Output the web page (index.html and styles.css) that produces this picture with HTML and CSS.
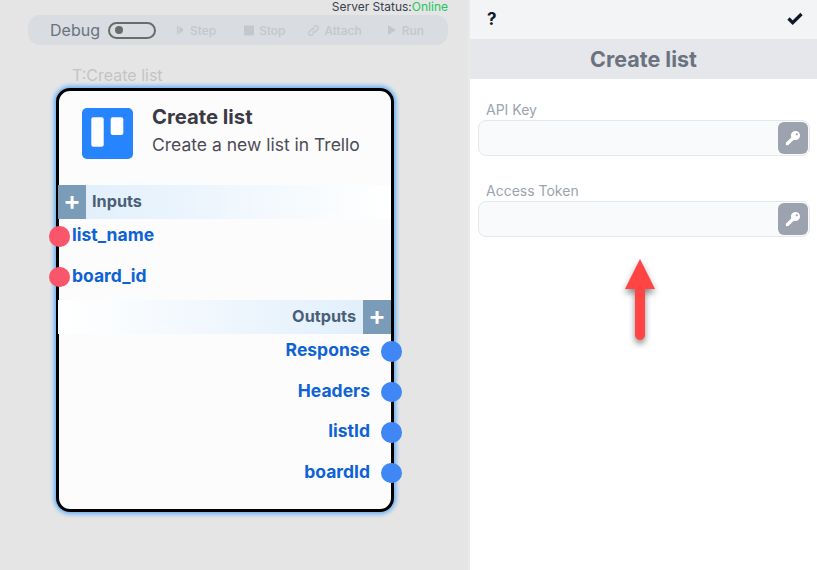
FILE: index.html
```html
<!DOCTYPE html>
<html lang="en">

<head>
    <meta charset="UTF-8">
    <title>Create list</title>
    <link rel="stylesheet" href="styles.css">
</head>

<body>
    <!-- Flow canvas -->
    <section class="canvas">
        <div class="serverStatus">Server Status:<span class="online">Online</span></div>
        <div class="toolbar">
            <span class="debugLabel">Debug</span>
            <span class="toggle"><span class="toggleKnob"></span></span>
            <span class="tool toolStep">
                <svg width="8" height="10" viewBox="0 0 8 10"><path d="M0 1h1.500v8H0zM2.500 1 6.500 5 2.500 9z" fill="#c4c7cb"/></svg>
                Step
            </span>
            <span class="tool toolStop">
                <svg width="10" height="11" viewBox="0 0 10 11"><rect width="10" height="10" y="0.500" fill="#c4c7cb"/></svg>
                Stop
            </span>
            <span class="tool toolAttach">
                <svg width="13" height="13" viewBox="0 0 13 13" fill="none" stroke="#c4c7cb" stroke-width="1.300"><path d="M5.500 7.500a2.200 2.200 0 0 0 3.100 0l2.200-2.200a2.200 2.200 0 0 0-3.100-3.100L6.600 3.300"/><path d="M7.500 5.500a2.200 2.200 0 0 0-3.100 0L2.200 7.700a2.200 2.200 0 0 0 3.100 3.100l1.100-1.100"/></svg>
                Attach
            </span>
            <span class="tool toolRun">
                <svg width="9" height="10" viewBox="0 0 9 10"><path d="M0 0 8 5 0 10z" fill="#c4c7cb"/></svg>
                Run
            </span>
        </div>

        <div class="nodeTitle">T:Create list</div>
        <div class="node">
            <div class="nodeHead">
                <svg class="trello" width="51" height="51" viewBox="0 0 51 51">
                    <rect width="51" height="51" rx="5" fill="#2684ff"/>
                    <rect x="9.300" y="9.300" width="12.400" height="29.400" rx="2" fill="#fff"/>
                    <rect x="28.700" y="9.300" width="12.600" height="17.700" rx="2" fill="#fff"/>
                </svg>
                <div class="nodeText">
                    <div class="nodeName">Create list</div>
                    <div class="nodeDesc">Create a new list in Trello</div>
                </div>
            </div>

            <div class="portHead inputsHead">
                <span class="plus">+</span>
                <span class="portHeadText">Inputs</span>
            </div>
            <div class="port inPort"><span class="dot red"></span>list_name</div>
            <div class="port inPort"><span class="dot red"></span>board_id</div>

            <div class="portHead outputsHead">
                <span class="portHeadText">Outputs</span>
                <span class="plus">+</span>
            </div>
            <div class="port outPort">Response<span class="dot blue"></span></div>
            <div class="port outPort">Headers<span class="dot blue"></span></div>
            <div class="port outPort">listId<span class="dot blue"></span></div>
            <div class="port outPort">boardId<span class="dot blue"></span></div>
        </div>
    </section>

    <!-- Settings panel -->
    <section class="panel">
        <div class="panelTop">
            <span class="help">?</span>
            <svg width="16" height="13" viewBox="0 0 16 13"><path d="M1.500 6.500 5.700 10.700 14.500 2" fill="none" stroke="#111827" stroke-width="3.200"/></svg>
        </div>
        <h2>Create list</h2>
        <div class="fields">
            <div class="field">
                <label>API Key</label>
                <div class="inputWrap">
                    <input type="text">
                    <button class="keyBtn">
                        <svg width="18" height="18" viewBox="0 0 18 18"><path d="M11.500 2a4.500 4.500 0 0 1 0 9c-.6 0-1.200-.1-1.700-.3L4.300 16 2 16.200l-.2-2.400 5.500-5.400a4.500 4.500 0 0 1 4.200-6.400zm1.300 2.200a1.100 1.100 0 1 0 0 2.200 1.100 1.100 0 0 0 0-2.200z" fill="#fff"/></svg>
                    </button>
                </div>
            </div>
            <div class="field">
                <label>Access Token</label>
                <div class="inputWrap">
                    <input type="text">
                    <button class="keyBtn">
                        <svg width="18" height="18" viewBox="0 0 18 18"><path d="M11.500 2a4.500 4.500 0 0 1 0 9c-.6 0-1.200-.1-1.700-.3L4.300 16 2 16.200l-.2-2.400 5.500-5.400a4.500 4.500 0 0 1 4.200-6.400zm1.300 2.200a1.100 1.100 0 1 0 0 2.200 1.100 1.100 0 0 0 0-2.200z" fill="#fff"/></svg>
                    </button>
                </div>
            </div>
        </div>
        <svg class="arrow" width="50" height="100" viewBox="0 0 50 100">
            <path d="M25 4 40 34H30V80a5 5 0 0 1-10 0V34H10z" fill="#ff4444"/>
        </svg>
    </section>
</body>

</html>
```

FILE: styles.css
```css
* {
    box-sizing: border-box;
}

body {
    margin: 0;
    width: 817px;
    height: 570px;
    display: flex;
    overflow: hidden;
    font-family: Inter, "Liberation Sans", sans-serif;
    background-color: #e5e5e5;
}

.canvas {
    position: relative;
    width: 470px;
    height: 570px;
    border-right: 2px solid #e9e9e9;
    background-color: #e5e5e5;
}

.serverStatus {
    height: 15px;
    padding-right: 20px;
    text-align: right;
    font-size: 12px;
    line-height: 14px;
    color: #374151;
}

.online {
    color: #22c55e;
}

.toolbar {
    display: flex;
    align-items: center;
    width: 420px;
    height: 30px;
    margin-left: 28px;
    padding-left: 22px;
    border-radius: 12px;
    background-color: #d9dce0;
}

.debugLabel {
    font-size: 16px;
    color: #6b7280;
}

.toggle {
    display: flex;
    align-items: center;
    width: 48px;
    height: 17px;
    margin-left: 8px;
    padding-left: 5px;
    border: 2px solid #6b6b6b;
    border-radius: 9px;
}

.toggleKnob {
    width: 8px;
    height: 8px;
    border-radius: 50%;
    background-color: #6b6b6b;
}

.tool {
    display: flex;
    align-items: center;
    gap: 5px;
    font-size: 12px;
    font-weight: 500;
    color: #c4c7cb;
}

.toolStep {
    margin-left: 21px;
}

.toolStop {
    margin-left: 28px;
}

.toolAttach {
    margin-left: 21px;
}

.toolRun {
    margin-left: 26px;
}

.nodeTitle {
    position: absolute;
    left: 72px;
    top: 65px;
    font-size: 16px;
    color: #c4c4c4;
}

.node {
    position: absolute;
    left: 56px;
    top: 88px;
    width: 338px;
    height: 424px;
    padding-top: 17px;
    border: 3px solid #000;
    border-radius: 14px;
    background-color: #fcfcfc;
    box-shadow: 0 0 4px 2px #62aef5;
}

.nodeHead {
    display: flex;
    gap: 19px;
    height: 77px;
    padding-left: 23px;
}

.trello {
    flex-shrink: 0;
}

.nodeText {
    margin-top: -3px;
}

.nodeName {
    font-size: 20.250px;
    font-weight: 700;
    line-height: 24px;
    color: #3a3a44;
}

.nodeDesc {
    margin-top: 4px;
    font-size: 17.500px;
    line-height: 24px;
    color: #4b4b55;
}

.portHead {
    display: flex;
    align-items: center;
    height: 34px;
    font-size: 16.250px;
    font-weight: 700;
    color: #4b5f78;
}

.portHeadText {
    padding-bottom: 3px;
}

.inputsHead {
    gap: 6px;
    margin-left: -1px;
    background: linear-gradient(to right, #dfeefb, #fff);
}

.outputsHead {
    justify-content: flex-end;
    gap: 7px;
    margin-left: -1px;
    background: linear-gradient(to left, #dfeefb, #fff);
}

.plus {
    width: 28px;
    height: 34px;
    text-align: center;
    font-size: 26px;
    font-weight: 600;
    line-height: 31px;
    color: #fff;
    background-color: #7b9cb8;
}

.port {
    position: relative;
    display: flex;
    height: 40.500px;
    font-size: 17.500px;
    font-weight: 700;
    line-height: 31px;
    color: #0f62d6;
}

.inPort {
    padding-left: 13px;
}

.outPort {
    justify-content: flex-end;
    padding-right: 21px;
}

.dot {
    position: absolute;
    top: 7px;
    width: 20.500px;
    height: 20.500px;
    border-radius: 50%;
}

.red {
    left: -10px;
    background-color: #f9556b;
}

.blue {
    right: -10.500px;
    background-color: #3f87f5;
}

.panel {
    position: relative;
    flex: 1;
    height: 570px;
    background-color: #fff;
}

.panelTop {
    display: flex;
    align-items: center;
    justify-content: space-between;
    height: 39px;
    padding: 0 14px 2px 17px;
    background-color: #f3f4f6;
}

.help {
    font-size: 17px;
    font-weight: 700;
    color: #111827;
}

h2 {
    margin: 0;
    height: 40px;
    text-align: center;
    font-size: 21.500px;
    font-weight: 700;
    line-height: 40px;
    color: #6b7280;
    background-color: #e5e7eb;
}

.fields {
    display: flex;
    flex-direction: column;
    gap: 26px;
    padding: 22px 7px 0 8px;
}

label {
    display: block;
    height: 19px;
    padding-left: 8px;
    font-size: 14px;
    line-height: 17px;
    color: #9ca3af;
}

.inputWrap {
    display: flex;
    align-items: center;
    height: 36px;
    padding-right: 1px;
    border: 1px solid #e5e7eb;
    border-radius: 8px;
    background-color: #f9fafb;
}

input {
    flex: 1;
    min-width: 0;
    height: 100%;
    border: 0;
    background: none;
}

.keyBtn {
    display: flex;
    align-items: center;
    justify-content: center;
    width: 30px;
    height: 32px;
    padding: 0;
    border: 0;
    border-radius: 6px;
    background-color: #9ca3af;
}

.arrow {
    position: absolute;
    left: 145px;
    top: 255px;
    filter: drop-shadow(0 4px 3px rgba(0, 0, 0, 0.45));
}
```
